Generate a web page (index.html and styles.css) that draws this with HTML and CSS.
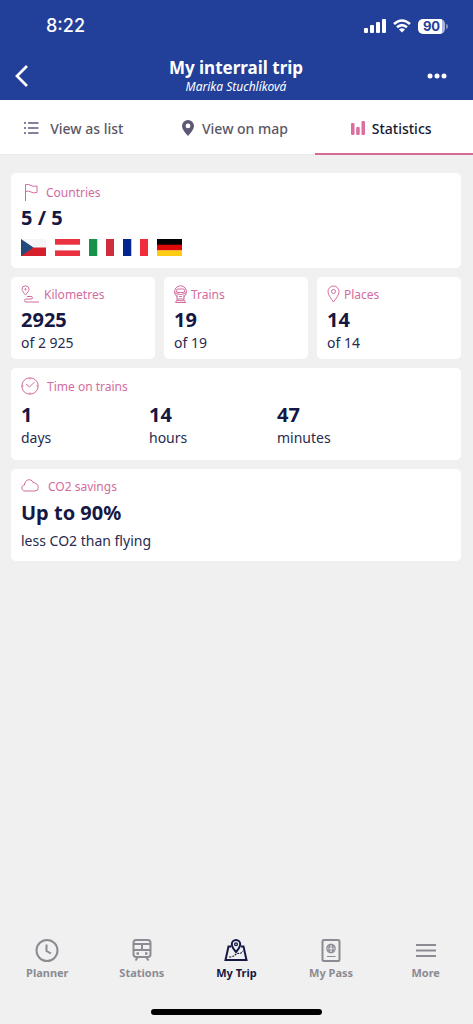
FILE: index.html
```html
<!DOCTYPE html>
<html lang="en">
<head>
<meta charset="utf-8">
<meta name="viewport" content="width=device-width, initial-scale=1">
<title>My interrail trip</title>
<link rel="stylesheet" href="styles.css">
</head>
<body>
<div class="app">
  <header class="header">
    <div class="status">
      <span class="time">8:22</span>
      <div class="status-icons">
        <svg width="22" height="14" viewBox="0 0 22 14" fill="#fff"><rect x="0" y="9" width="4" height="5" rx="1"/><rect x="6" y="6" width="4" height="8" rx="1"/><rect x="12" y="3" width="4" height="11" rx="1"/><rect x="18" y="0" width="4" height="14" rx="1"/></svg>
        <svg width="18" height="14" viewBox="0 0 18 14" fill="none" stroke="#fff" stroke-width="2.500"><path d="M1 5Q9-2 17 5M4 8.300Q9 3.900 14 8.300"/><path d="M6 10.500Q9 8 12 10.500L9 13.500Z" fill="#fff" stroke="none"/></svg>
        <span class="battery">90</span>
      </div>
    </div>
    <div class="titlebar">
      <button class="back" aria-label="Back"><svg width="16" height="24" viewBox="0 0 16 24" fill="none" stroke="#fff" stroke-width="2.700"><path d="M14 2L4 12L14 22"/></svg></button>
      <div class="titles"><h1>My interrail trip</h1><p>Marika Stuchlíková</p></div>
      <button class="options" aria-label="Options"><svg width="20" height="6" viewBox="0 0 20 6" fill="#fff"><circle cx="3" cy="3" r="2.500"/><circle cx="10" cy="3" r="2.500"/><circle cx="17" cy="3" r="2.500"/></svg></button>
    </div>
  </header>
  <div class="tabs" role="tablist">
    <button class="tab tab-list" role="tab" aria-selected="false"><svg width="15" height="12" viewBox="0 0 15 12" stroke="#5d5878" stroke-width="1.400"><path d="M0 1H2M4 1H14.500M0 6H2M4 6H14.500M0 11H2M4 11H14.500"/></svg>View as list</button>
    <button class="tab tab-map" role="tab" aria-selected="false"><svg width="12" height="16" viewBox="0 0 12 16"><path fill="#5d5878" fill-rule="evenodd" d="M6 0A6 6 0 0 0 0 6C0 9.500 4 13.500 6 16C8 13.500 12 9.500 12 6A6 6 0 0 0 6 0ZM6 3.500A2.400 2.400 0 1 1 6 8.300A2.400 2.400 0 1 1 6 3.500Z"/></svg>View on map</button>
    <button class="tab tab-stats active" role="tab" aria-selected="true"><svg width="14" height="14" viewBox="0 0 14 14" fill="#dc6e9f"><rect y="2" width="3.500" height="12" rx="1"/><rect x="5.200" y="6" width="3.500" height="8" rx="1"/><rect x="10.500" width="3.500" height="14" rx="1"/></svg>Statistics</button>
  </div>
  <main class="content">
    <section class="card countries">
      <h2 class="label"><svg width="18" height="18" viewBox="0 0 18 18"><path d="M4.500 18V1.500Q8 1 10 2.500T16 3V9.500Q12 10.500 10 9T4.500 8.500"/></svg>Countries</h2>
      <p class="value">5 / 5</p>
      <div class="flags">
        <svg width="25" height="17" viewBox="0 0 25 17"><path fill="#f4f5f6" d="M0 0H25V8.500H0Z"/><path fill="#d61f2b" d="M0 8.500H25V17H0Z"/><path fill="#214a7c" d="M0 0L12.500 8.500L0 17Z"/></svg>
        <svg width="25" height="17" viewBox="0 0 25 17"><path fill="#ea3140" d="M0 0H25V17H0Z"/><path fill="#fff" d="M0 5.700H25V11.400H0Z"/></svg>
        <svg width="25" height="17" viewBox="0 0 25 17"><path fill="#17924a" d="M0 0H8.500V17H0Z"/><path fill="#fff" d="M8.500 0H17V17H8.500Z"/><path fill="#ce2d3b" d="M17 0H25V17H17Z"/></svg>
        <svg width="25" height="17" viewBox="0 0 25 17"><path fill="#04248f" d="M0 0H8.500V17H0Z"/><path fill="#fff" d="M8.500 0H17V17H8.500Z"/><path fill="#ef2b3c" d="M17 0H25V17H17Z"/></svg>
        <svg width="25" height="17" viewBox="0 0 25 17"><path d="M0 0H25V6H0Z"/><path fill="#dc0908" d="M0 5.700H25V11.500H0Z"/><path fill="#fecd13" d="M0 11.400H25V17H0Z"/></svg>
      </div>
    </section>
    <div class="row">
      <section class="card">
        <h2 class="label"><svg width="18" height="18" viewBox="0 0 18 18"><path d="M4.500 10C3 8 1 6 1 4.300A3.500 3.500 0 0 1 8 4.300C8 6 6 8 4.500 10ZM4.500 3.300V5.300M3.500 4.300H5.500M6 11.500H10Q11.500 11.500 11.500 12.800T10 14H5Q3.500 14 3.500 15.500T5 17H18"/></svg>Kilometres</h2>
        <p class="value">2925</p><p class="sub">of 2 925</p>
      </section>
      <section class="card trains">
        <h2 class="label"><svg width="13" height="18" viewBox="0 0 13 18"><path d="M3.500 12A6 6 0 1 1 9.500 12M4 4H9A1.700 1.700 0 0 1 9 7.500H4A1.700 1.700 0 0 1 4 4ZM1 7.500Q6.500 11.500 12 7.500M3 9.500V14H10V9.500M3.500 14L1.500 17.500H11.500L9.500 14M5 11.500H8M3 15.700H10"/></svg>Trains</h2>
        <p class="value">19</p><p class="sub">of 19</p>
      </section>
      <section class="card places">
        <h2 class="label"><svg width="13" height="18" viewBox="0 0 13 18"><path d="M6.500 17C4 13.500 1 10 1 6.500A5.500 5.500 0 0 1 12 6.500C12 10 9 13.500 6.500 17Z"/><circle cx="6.500" cy="6.500" r="2"/></svg>Places</h2>
        <p class="value">14</p><p class="sub">of 14</p>
      </section>
    </div>
    <section class="card duration">
      <h2 class="label"><svg width="18" height="18" viewBox="0 0 18 18"><circle cx="9" cy="9" r="8.200"/><path d="M5 7L8.500 10L13.500 5M9 1V2.500M9 15.500V17M1 9H2.500M15.500 9H17"/></svg>Time on trains</h2>
      <div class="parts">
        <div><p class="value">1</p><p class="sub">days</p></div>
        <div><p class="value">14</p><p class="sub">hours</p></div>
        <div><p class="value">47</p><p class="sub">minutes</p></div>
      </div>
    </section>
    <section class="card savings">
      <h2 class="label"><svg width="18" height="18" viewBox="0 0 18 18"><path d="M4 14C0 14 -.5 8.500 3.500 8C3.500 2 10.500 1 12 5.500C15 5.500 17.300 8 17.300 10.500Q17.300 14 14 14Z"/></svg>CO2 savings</h2>
      <p class="value">Up to 90%</p><p class="sub">less CO2 than flying</p>
    </section>
  </main>
  <nav class="nav">
    <a href="#planner"><svg width="24" height="24" viewBox="0 0 24 24"><circle cx="12" cy="12.500" r="10.500"/><path d="M11.500 6.500V13L16 15.500"/></svg>Planner</a>
    <a href="#stations"><svg width="24" height="24" viewBox="0 0 24 24"><path d="M6 2H18Q20.500 2 20.500 5V16Q20.500 19 18 19H6Q3.500 19 3.500 16V5Q3.500 2 6 2ZM4 6H20M12 6V12M4 12H20M8 19L5.500 22.500M16 19L18.500 22.500"/><path d="M6.500 15.500H9M15 15.500H17.500" stroke-width="2.500"/></svg>Stations</a>
    <a class="current" href="#trip" aria-current="page"><svg width="24" height="24" viewBox="0 0 24 24"><path d="M7 8.500H4.500L1.500 22H22.500L19.500 8.500H17M12 14C9.500 11 7.800 8.500 7.800 6.200A4.200 4.200 0 0 1 16.200 6.200C16.200 8.500 14.500 11 12 14Z"/><circle cx="12" cy="6.200" r="1.400" stroke-width="1.300"/><path d="M5 19Q9 19 11 17T15 15.500T19 13" stroke-width="1.100" stroke-dasharray="2 1"/></svg>My Trip</a>
    <a href="#pass"><svg width="24" height="24" viewBox="0 0 24 24"><rect x="3.500" y="2" width="17" height="21" rx="1.500"/><g stroke-width="1.200"><circle cx="12" cy="10.500" r="4.200"/><ellipse cx="12" cy="10.500" rx="2" ry="4.200"/><path d="M8 9H16M8 12H16M8 18.500H16.500"/></g></svg>My Pass</a>
    <a href="#more"><svg width="24" height="24" viewBox="0 0 24 24"><path d="M2 7H22M2 12.500H22M2 18H22"/></svg>More</a>
  </nav>
  <div class="home-indicator"></div>
</div>
</body>
</html>
```
FILE: styles.css
```css
* { box-sizing: border-box; }
body {
  margin: 0;
  background: #f0f0f0;
  color: #151744;
  font-family: "Noto Sans", "Open Sans", sans-serif;
}
h1, h2, p { margin: 0; }
svg { display: block; flex-shrink: 0; }
button { border: 0; padding: 0; background: none; font: inherit; color: inherit; }
.app { min-height: 100vh; display: flex; flex-direction: column; }

.header { background: #223f99; color: #fff; }
.status { height: 52px; padding: 0 28px 0 46px; display: flex; align-items: center; justify-content: space-between; }
.time { font: 500 18px/24px Inter, sans-serif; }
.status-icons { display: flex; align-items: center; gap: 7px; }
.battery {
  position: relative;
  width: 27px;
  border-radius: 5px;
  background: linear-gradient(90deg, #fff 90%, #a9b5da 90%);
  color: #223f99;
  font: 700 13px/15px Inter, sans-serif;
  text-align: center;
}
.battery::after { content: ""; position: absolute; right: -3px; top: 5px; width: 2px; height: 5px; border-radius: 0 2px 2px 0; background: #8191c5; }
.titlebar { height: 48px; padding: 0 26px 0 13px; display: grid; grid-template-columns: 32px 1fr 20px; align-items: center; }
.titles { text-align: center; }
.titles h1 { font-size: 17px; line-height: 22px; font-weight: 700; }
.titles p { font-size: 12px; line-height: 16px; font-style: italic; }

.tabs { display: grid; grid-template-columns: repeat(3, 1fr); height: 55px; background: #fff; border-bottom: 1px solid #e9e9eb; }
.tab { display: flex; align-items: center; justify-content: center; height: 55px; padding-top: 3px; border-bottom: 2px solid transparent; color: #5a5766; font-size: 14px; font-weight: 500; white-space: nowrap; }
.tab-list { gap: 11px; padding-right: 10px; }
.tab-map { gap: 8px; padding-right: 3px; }
.tab-stats { gap: 7px; padding-right: 6px; }
.tab.active { color: #17172f; border-color: #d5699a; }

.content { flex: 1; padding: 18px 12px 18px 11px; display: flex; flex-direction: column; gap: 9px; }
.card { padding: 6px 10px 8px; border-radius: 5px; background: #fff; }
.row { display: grid; grid-template-columns: repeat(3, 1fr); gap: 9px; }
.label { display: flex; align-items: center; gap: 5px; height: 22px; color: #d36c9e; font-size: 12px; font-weight: 400; }
.label svg { fill: none; stroke: #d36c9e; stroke-width: 1; }
.value { font-size: 20px; line-height: 30px; font-weight: 700; }
.sub { font-size: 14px; line-height: 16px; color: #282b50; }
.countries { padding: 8px 10px 12px; }
.countries .label { gap: 7px; }
.flags { display: flex; gap: 9px; margin-top: 6px; }
.trains .label, .places .label { gap: 4px; }
.duration { padding: 7px 10px 14px; }
.duration .label { gap: 8px; }
.parts { display: grid; grid-template-columns: repeat(3, 128px); margin-top: 3px; }
.savings { padding-bottom: 12px; }
.savings .label { gap: 9px; }
.savings .value { margin: 1px 0 5px; }

.nav { display: grid; grid-template-columns: repeat(5, 1fr); }
.nav a { display: flex; flex-direction: column; align-items: center; gap: 3px; color: #8b8b93; text-decoration: none; font-size: 11px; line-height: 16px; font-weight: 700; }
.nav svg { fill: none; stroke: currentColor; stroke-width: 2; }
.nav .current { color: #151744; }
.home-indicator { width: 36%; height: 6px; margin: 28px auto 9px; border-radius: 3px; background: #000; }
```
